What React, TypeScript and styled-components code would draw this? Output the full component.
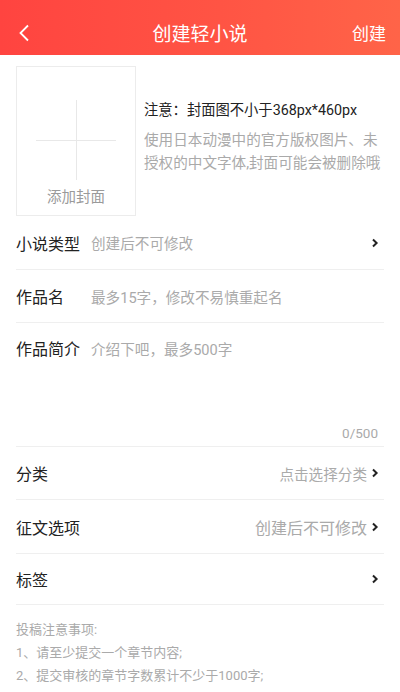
import React from "react";
import styled, { createGlobalStyle } from "styled-components";

const Global = createGlobalStyle`
  html, body { margin: 0; padding: 0; background: #fff; }
  body { font-family: Roboto, "Noto Sans CJK SC", "Noto Sans", sans-serif; overflow: hidden; }
  * { box-sizing: border-box; }
`;

const Page = styled.div`
  width: 400px;
  height: 692px;
  overflow: hidden;
  background: #fff;
  display: flex;
  flex-direction: column;
`;

const Header = styled.header`
  height: 55px;
  flex-shrink: 0;
  background: linear-gradient(90deg, #ff4440 0%, #ff5444 55%, #ff6448 100%);
  display: grid;
  grid-template-columns: 60px 1fr 60px;
  align-items: center;
  padding-top: 10px;
  color: #fff;
`;

const BackBtn = styled.button`
  background: none;
  border: 0;
  padding: 0 0 0 18px;
  display: flex;
  align-items: center;
  height: 100%;
  cursor: pointer;
`;

const Title = styled.h1`
  margin: 0;
  text-align: center;
  font-size: 19px;
  font-weight: 400;
  letter-spacing: 0;
`;

const Action = styled.span`
  text-align: right;
  padding-right: 14px;
  font-size: 17px;
`;

const Content = styled.main`
  padding: 0 16px;
  display: flex;
  flex-direction: column;
`;

const CoverSection = styled.section`
  display: flex;
  gap: 8px;
  padding-top: 11px;
`;

const CoverBox = styled.div`
  width: 120px;
  height: 150px;
  border: 1px solid #ececec;
  flex-shrink: 0;
  display: flex;
  flex-direction: column;
  align-items: center;
`;

const Plus = styled.div`
  margin-top: 33px;
  width: 80px;
  height: 80px;
  position: relative;
  &::before, &::after {
    content: "";
    position: absolute;
    background: #e8e8e8;
  }
  &::before { left: 0; right: 0; top: 40px; height: 1px; }
  &::after { top: 0; bottom: 0; left: 40px; width: 1px; }
`;

const CoverLabel = styled.span`
  margin-top: 7px;
  font-size: 14.5px;
  color: #9a9a9a;
  line-height: 22px;
`;

const CoverNotes = styled.div`
  padding-top: 33px;
  display: flex;
  flex-direction: column;
`;

const NoteTitle = styled.p`
  margin: 0 0 8px;
  font-size: 14.3px;
  color: #222;
  line-height: 22px;
`;

const NoteBody = styled.p`
  margin: 0;
  font-size: 14.6px;
  color: #aaa;
  line-height: 23px;
  letter-spacing: 0;
`;

const Row = styled.div<{ $h?: number }>`
  height: ${(p) => p.$h ?? 53}px;
  border-bottom: 1px solid #efefef;
  display: flex;
  align-items: center;
`;

const Label = styled.span`
  width: 75px;
  flex-shrink: 0;
  font-size: 16px;
  color: #222;
`;

const Placeholder = styled.span<{ $size?: number }>`
  font-size: ${(p) => p.$size ?? 14.6}px;
  color: #aaa;
`;

const Spacer = styled.span`
  flex: 1;
`;

const Chevron = styled.svg`
  width: 8px;
  height: 10px;
  margin-left: 4px;
  margin-right: 5px;
  flex-shrink: 0;
`;

const DescRow = styled.div`
  height: 124px;
  border-bottom: 1px solid #efefef;
  display: flex;
  flex-direction: column;
  padding-top: 13px;
`;

const DescTop = styled.div`
  display: flex;
  align-items: center;
`;

const Counter = styled.span`
  margin-top: auto;
  margin-bottom: 5px;
  align-self: flex-end;
  margin-right: 6px;
  font-size: 13.5px;
  color: #aaa;
`;

const Notice = styled.section`
  padding-top: 13px;
  display: flex;
  flex-direction: column;
`;

const NoticeLine = styled.p`
  margin: 0;
  font-size: 13px;
  line-height: 23px;
  color: #aaa;
  white-space: nowrap;
`;

const Arrow = () => (
  <Chevron viewBox="0 0 8 10">
    <path d="M2 1.5 L5.6 5 L2 8.5" fill="none" stroke="#222" strokeWidth="2" />
  </Chevron>
);

export default function App() {
  return (
    <>
      <Global />
      <Page>
        <Header>
          <BackBtn aria-label="back">
            <svg width="12" height="18" viewBox="0 0 12 18">
              <path d="M10 1.5 L2.5 9 L10 16.5" fill="none" stroke="#fff" strokeWidth="1.8" />
            </svg>
          </BackBtn>
          <Title>创建轻小说</Title>
          <Action>创建</Action>
        </Header>
        <Content>
          <CoverSection>
            <CoverBox>
              <Plus />
              <CoverLabel>添加封面</CoverLabel>
            </CoverBox>
            <CoverNotes>
              <NoteTitle>注意：封面图不小于368px*460px</NoteTitle>
              <NoteBody>
                使用日本动漫中的官方版权图片、未
                <br />
                授权的中文字体,封面可能会被删除哦
              </NoteBody>
            </CoverNotes>
          </CoverSection>
          <Row $h={54}>
            <Label>小说类型</Label>
            <Placeholder>创建后不可修改</Placeholder>
            <Spacer />
            <Arrow />
          </Row>
          <Row>
            <Label>作品名</Label>
            <Placeholder>最多15字，修改不易慎重起名</Placeholder>
          </Row>
          <DescRow>
            <DescTop>
              <Label>作品简介</Label>
              <Placeholder>介绍下吧，最多500字</Placeholder>
            </DescTop>
            <Counter>0/500</Counter>
          </DescRow>
          <Row>
            <Label>分类</Label>
            <Spacer />
            <Placeholder>点击选择分类</Placeholder>
            <Arrow />
          </Row>
          <Row $h={54}>
            <Label>征文选项</Label>
            <Spacer />
            <Placeholder $size={16}>创建后不可修改</Placeholder>
            <Arrow />
          </Row>
          <Row $h={51}>
            <Label>标签</Label>
            <Spacer />
            <Arrow />
          </Row>
          <Notice>
            <NoticeLine>投稿注意事项:</NoticeLine>
            <NoticeLine>1、请至少提交一个章节内容;</NoticeLine>
            <NoticeLine>2、提交审核的章节字数累计不少于1000字;</NoticeLine>
          </Notice>
        </Content>
      </Page>
    </>
  );
}
